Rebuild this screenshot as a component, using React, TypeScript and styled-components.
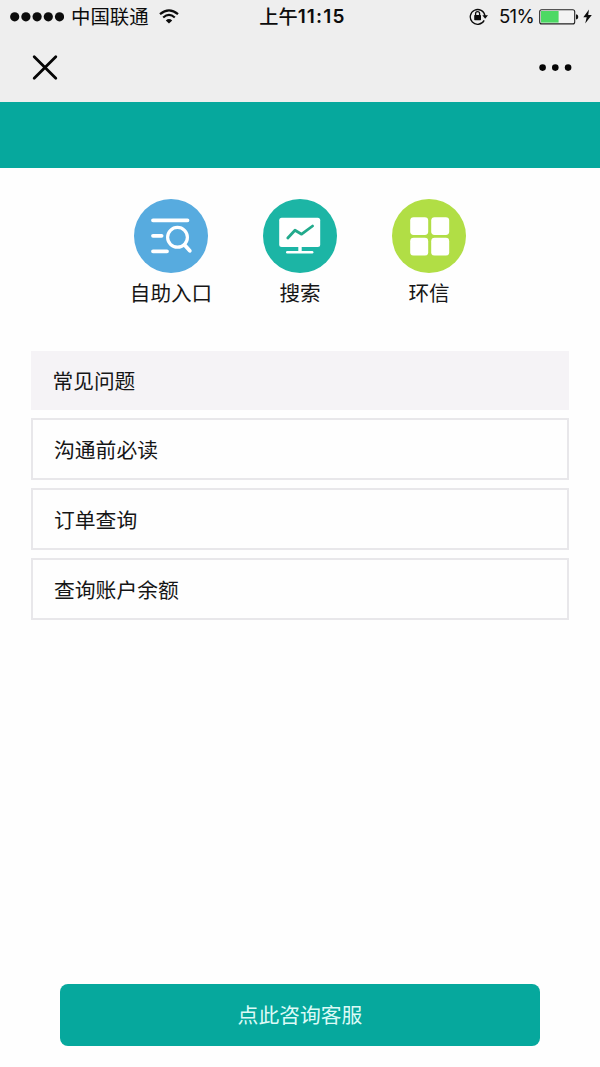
import React from 'react';
import styled, { createGlobalStyle } from 'styled-components';

const GlobalStyle = createGlobalStyle`
  * { box-sizing: border-box; }
  body {
    margin: 0;
    background: #fefefe;
    color: #161616;
    font-family: Inter, "Noto Sans CJK SC", sans-serif;
  }
`;

const Screen = styled.div`
  display: flex;
  flex-direction: column;
  width: 600px;
  height: 1067px;
  overflow: hidden;
`;

const StatusBar = styled.header`
  display: grid;
  grid-template-columns: 1fr auto 1fr;
  grid-template-rows: 33px;
  align-items: center;
  height: 33px;
  padding: 0 8px 0 10px;
  background: #eee;
  color: #0c0c0c;
`;

const StatusGroup = styled.div<{ $end?: boolean }>`
  display: flex;
  align-items: center;
  justify-content: ${(p) => (p.$end ? 'flex-end' : 'flex-start')};
  height: 33px;
`;

const Carrier = styled.span`
  margin: 0 10px 0 7px;
  padding-top: 2px;
  font-size: 19.4px;
  line-height: 31px;
  white-space: nowrap;
`;

const Clock = styled.div`
  display: flex;
  align-items: center;
  height: 33px;
  padding-left: 3px;
  font-size: 19.2px;
  font-weight: 500;
  white-space: nowrap;
`;

const ClockPeriod = styled.span`
  padding-top: 2px;
  line-height: 31px;
`;

const ClockDigits = styled.span`
  font-size: 19px;
  font-weight: 600;
  letter-spacing: 1.2px;
  line-height: 33px;
`;

const Percent = styled.span`
  margin: 0 5px 0 10px;
  font-size: 18.6px;
  letter-spacing: -0.7px;
  line-height: 33px;
`;

const NavBar = styled.nav`
  display: flex;
  align-items: center;
  justify-content: space-between;
  height: 69px;
  padding: 0 27px 0 31px;
  background: #eee;
`;

const NavButton = styled.button`
  display: flex;
  padding: 0;
  border: 0;
  background: none;
  color: #050505;
`;

const Banner = styled.div`
  height: 66px;
  background: #06a89d;
`;

const Shortcuts = styled.section`
  display: flex;
  justify-content: center;
  padding-top: 31px;
`;

const Shortcut = styled.div`
  display: flex;
  flex-direction: column;
  align-items: center;
  width: 129px;
`;

const Disc = styled.div<{ $color: string }>`
  display: flex;
  width: 74px;
  height: 74px;
  border-radius: 50%;
  background: ${(p) => p.$color};
`;

const ShortcutLabel = styled.span`
  margin-top: 5px;
  font-size: 20.6px;
  line-height: 32px;
`;

const Questions = styled.section`
  display: flex;
  flex-direction: column;
  gap: 8.3px;
  margin: 40.5px 31px 0;
`;

const QuestionsTitle = styled.h2`
  height: 59px;
  margin: 0;
  padding-left: 21.5px;
  background: #f5f3f6;
  font-size: 20.7px;
  font-weight: 400;
  line-height: 61px;
`;

const Question = styled.div`
  height: 62px;
  padding-left: 21px;
  border: 2px solid #e8e7ea;
  background: #fefefe;
  font-size: 20.8px;
  line-height: 61px;
`;

const ContactButton = styled.button`
  height: 62px;
  margin: auto 60px 21px;
  padding: 2px 0 0;
  border: 0;
  border-radius: 8px;
  background: #06a89d;
  color: #dcfaf6;
  font-family: inherit;
  font-size: 20.8px;
  line-height: 60px;
`;

const SignalDots = () => (
  <svg width="54" height="10" viewBox="0 0 54 10" fill="currentColor">
    {[4.7, 15.9, 27.1, 38.3, 49.5].map((x) => (
      <circle key={x} cx={x} cy="4.8" r="4.6" />
    ))}
  </svg>
);

const WifiIcon = () => (
  <svg width="20" height="15" viewBox="0 0 20 15" fill="none" stroke="currentColor" strokeWidth="2.2">
    <path d="M1 5.2Q10-2.6 19 5.2" />
    <path d="M4.2 8.5Q10 3.4 15.8 8.5" />
    <path d="M10 14.6L6.8 11.4Q10 8.8 13.2 11.4Z" fill="currentColor" stroke="none" />
  </svg>
);

const RotationLockIcon = () => (
  <svg width="20" height="17" viewBox="0 0 20 17" fill="none" stroke="currentColor" strokeWidth="1.3">
    <path d="M15.2 12.4A7.4 7.4 0 1 1 16 8" />
    <path d="M13.3 7.2H19L16.2 10.7Z" fill="currentColor" stroke="none" />
    <rect x="5.2" y="7" width="6.8" height="5.2" rx=".6" fill="currentColor" stroke="none" />
    <path d="M6.6 7.6V5.6a2 2 0 0 1 4 0v2" />
  </svg>
);

const BatteryIcon = () => (
  <svg width="40" height="16" viewBox="0 0 40 16">
    <rect x=".7" y=".7" width="35" height="14.2" rx="2" fill="#f3f3f3" stroke="#222" strokeWidth="1.1" />
    <rect x="2" y="2" width="17.6" height="11.6" fill="#4cd964" />
    <path d="M37 5.2Q39.3 5.6 39.3 7.9T37 10.6Z" fill="#111" />
  </svg>
);

const BoltIcon = () => (
  <svg width="9" height="15" viewBox="0 0 9 15" style={{ marginLeft: 4 }}>
    <path d="M6 .4L.3 8.3H3.7L2.2 14.4L8.8 6.1H5.2Z" fill="currentColor" />
  </svg>
);

const CloseIcon = () => (
  <svg width="28" height="28" viewBox="0 0 28 28" stroke="currentColor" strokeWidth="2.8" strokeLinecap="round">
    <path d="M3.2 2.7L24.8 24.3M24.8 2.7L3.2 24.3" />
  </svg>
);

const MoreIcon = () => (
  <svg width="34" height="8" viewBox="0 0 34 8" fill="currentColor">
    <circle cx="3.6" cy="3.6" r="3.3" />
    <circle cx="16.3" cy="3.6" r="3.3" />
    <circle cx="29.1" cy="3.6" r="3.3" />
  </svg>
);

const ListSearchIcon = () => (
  <svg width="74" height="74" viewBox="0 0 74 74" fill="none" stroke="#fff" strokeWidth="3.8" strokeLinecap="round">
    <path d="M19 21.3H53.5M19 36.8H27.6M19 52.3H33" />
    <circle cx="43.5" cy="38.3" r="9.9" strokeWidth="3.2" />
    <path d="M50.4 45.8L55.8 51.8" />
  </svg>
);

const MonitorIcon = () => (
  <svg width="74" height="74" viewBox="0 0 74 74" fill="none" strokeLinecap="round" strokeLinejoin="round">
    <rect x="16.2" y="18.8" width="41" height="29.2" rx="2.5" fill="#fff" />
    <path d="M24.8 39L32 31.3L38.6 35.2L49.6 27" stroke="#22aa8c" strokeWidth="2.8" />
    <path d="M37 48V52.5" stroke="#fff" strokeWidth="3.4" strokeLinecap="butt" />
    <path d="M24.2 53.2H49.2" stroke="#fff" strokeWidth="2.4" />
  </svg>
);

const TilesIcon = () => (
  <svg width="74" height="74" viewBox="0 0 74 74" fill="#fff">
    {[18.2, 39.2].map((x) =>
      [18.2, 38.8].map((y) => <rect key={`${x}-${y}`} x={x} y={y} width="18" height="17.8" rx="3.4" />)
    )}
  </svg>
);

const shortcuts = [
  { label: '自助入口', color: '#57abdf', icon: <ListSearchIcon /> },
  { label: '搜索', color: '#1cb5a5', icon: <MonitorIcon /> },
  { label: '环信', color: '#b1de45', icon: <TilesIcon /> },
];

const questions = ['沟通前必读', '订单查询', '查询账户余额'];

export default function App() {
  return (
    <Screen lang="zh-CN">
      <GlobalStyle />
      <StatusBar>
        <StatusGroup>
          <SignalDots />
          <Carrier>中国联通</Carrier>
          <WifiIcon />
        </StatusGroup>
        <Clock>
          <ClockPeriod>上午</ClockPeriod>
          <ClockDigits>11:15</ClockDigits>
        </Clock>
        <StatusGroup $end>
          <RotationLockIcon />
          <Percent>51%</Percent>
          <BatteryIcon />
          <BoltIcon />
        </StatusGroup>
      </StatusBar>
      <NavBar>
        <NavButton aria-label="关闭">
          <CloseIcon />
        </NavButton>
        <NavButton aria-label="更多">
          <MoreIcon />
        </NavButton>
      </NavBar>
      <Banner />
      <Shortcuts>
        {shortcuts.map((s) => (
          <Shortcut key={s.label}>
            <Disc $color={s.color}>{s.icon}</Disc>
            <ShortcutLabel>{s.label}</ShortcutLabel>
          </Shortcut>
        ))}
      </Shortcuts>
      <Questions>
        <QuestionsTitle>常见问题</QuestionsTitle>
        {questions.map((q) => (
          <Question key={q}>{q}</Question>
        ))}
      </Questions>
      <ContactButton>点此咨询客服</ContactButton>
    </Screen>
  );
}
